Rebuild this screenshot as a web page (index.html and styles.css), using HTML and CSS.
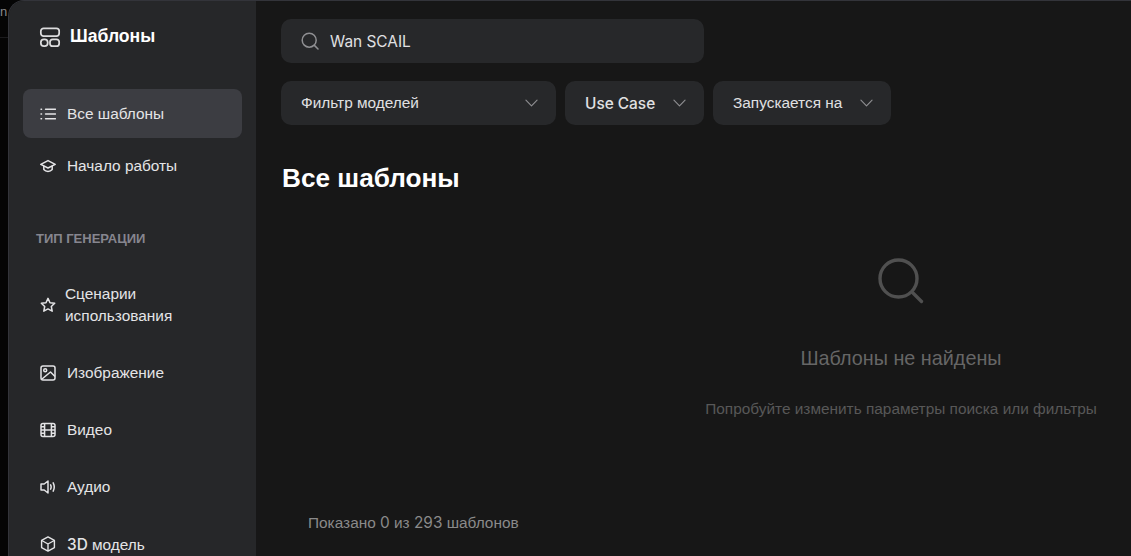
FILE: index.html
```html
<!DOCTYPE html>
<html lang="ru">
<head>
<meta charset="utf-8">
<title>Шаблоны</title>
<link rel="stylesheet" href="styles.css">
</head>
<body>
<div class="backdrop"><span class="backdrop-text">n</span></div>
<div class="dialog">
  <aside class="sidebar">
    <div class="brand">
      <svg class="brand-icon" viewBox="0 0 24 24" fill="none" stroke="currentColor" stroke-width="1.9" stroke-linecap="round" stroke-linejoin="round"><rect x="2" y="2.5" width="20" height="8.5" rx="3"/><rect x="2" y="14.5" width="7.5" height="7.5" rx="3.4"/><rect x="12" y="14.5" width="10" height="7.5" rx="3"/></svg>
      <span>Шаблоны</span>
    </div>
    <nav class="nav">
      <a class="item active">
        <svg class="icon" viewBox="0 0 16 16" fill="none" stroke="currentColor" stroke-width="1.4" stroke-linecap="round"><path d="M5.5 3.2H15.5M5.5 8H15.5M5.5 12.8H15.5M1 3.2h.6M1 8h.6M1 12.8h.6"/></svg>
        <span>Все шаблоны</span>
      </a>
      <a class="item start">
        <svg class="icon" viewBox="0 0 16 16" fill="none" stroke="currentColor" stroke-width="1.5" stroke-linecap="round" stroke-linejoin="round"><path d="M8 2.6.8 6.4 8 10l7.2-3.6z"/><path d="M3.8 8.2v3.4c1 1.2 2.6 1.8 4.2 1.8s3.2-.6 4.2-1.8V8.2"/></svg>
        <span>Начало работы</span>
      </a>
      <div class="section">ТИП ГЕНЕРАЦИИ</div>
      <a class="item wrap">
        <svg class="icon" viewBox="0 0 16 16" fill="none" stroke="currentColor" stroke-width="1.5" stroke-linejoin="round"><path d="m8 1.4 2 4.3 4.7.6-3.4 3.2.9 4.7L8 11.9l-4.2 2.3.9-4.7L1.3 6.3 6 5.7z"/></svg>
        <span class="wrap-label">Сценарии использования</span>
      </a>
      <a class="item image">
        <svg class="icon" viewBox="0 0 16 16" fill="none" stroke="currentColor" stroke-width="1.5" stroke-linejoin="round"><rect x="1" y="1" width="14" height="14" rx="2"/><circle cx="5.2" cy="5.2" r="1.5"/><path d="m2 14 8.5-7 4.5 4.5"/></svg>
        <span>Изображение</span>
      </a>
      <a class="item media">
        <svg class="icon" viewBox="0 0 16 16" fill="none" stroke="currentColor" stroke-width="1.5" stroke-linejoin="round"><rect x="1" y="1.5" width="14" height="13" rx="2"/><path d="M4.6 1.5v13M11.4 1.5v13M1 8h14M1 4.7h3.6M1 11.3h3.6M11.4 4.7H15M11.4 11.3H15"/></svg>
        <span>Видео</span>
      </a>
      <a class="item media">
        <svg class="icon" viewBox="0 0 16 16" fill="none" stroke="currentColor" stroke-width="1.5" stroke-linecap="round" stroke-linejoin="round"><path d="M8 2v12L4.2 11H1V5h3.2z"/><path d="M10.6 5.8c.7 1.4.7 3 0 4.4M13.2 3.8c1.3 2.6 1.3 5.8 0 8.4"/></svg>
        <span>Аудио</span>
      </a>
      <a class="item media">
        <svg class="icon" viewBox="0 0 16 16" fill="none" stroke="currentColor" stroke-width="1.4" stroke-linejoin="round"><path d="M8 .9 14.4 4.4v7.2L8 15.1l-6.4-3.5V4.4z"/><path d="M1.8 4.5 8 8l6.2-3.5M8 8v7"/></svg>
        <span><span class="latin">3D</span> модель</span>
      </a>
    </nav>
  </aside>
  <main class="main">
    <div class="search">
      <svg class="search-icon" viewBox="0 0 18 18" fill="none" stroke="currentColor" stroke-width="1.5" stroke-linecap="round"><circle cx="8.2" cy="8.2" r="7"/><path d="m13.4 13.4 3.6 3.6"/></svg>
      <span class="latin">Wan SCAIL</span>
    </div>
    <div class="filters">
      <div class="filter models"><span>Фильтр моделей</span><svg class="chev" viewBox="0 0 14 8" fill="none" stroke="currentColor" stroke-width="1.2" stroke-linecap="round" stroke-linejoin="round"><path d="m1 1 6 6 6-6"/></svg></div>
      <div class="filter usecase"><span class="latin">Use Case</span><svg class="chev" viewBox="0 0 14 8" fill="none" stroke="currentColor" stroke-width="1.2" stroke-linecap="round" stroke-linejoin="round"><path d="m1 1 6 6 6-6"/></svg></div>
      <div class="filter runs"><span>Запускается на</span><svg class="chev" viewBox="0 0 14 8" fill="none" stroke="currentColor" stroke-width="1.2" stroke-linecap="round" stroke-linejoin="round"><path d="m1 1 6 6 6-6"/></svg></div>
    </div>
    <h1 class="title">Все шаблоны</h1>
    <div class="empty">
      <svg class="empty-icon" viewBox="0 0 46 46" fill="none" stroke="currentColor" stroke-width="3.4" stroke-linecap="round"><circle cx="20.5" cy="20.5" r="18.5"/><path d="m34.5 34.5 9 9"/></svg>
      <div class="empty-title">Шаблоны не найдены</div>
      <div class="empty-text">Попробуйте изменить параметры поиска или фильтры</div>
    </div>
    <div class="count">Показано <span class="digits">0</span> из <span class="digits">293</span> шаблонов</div>
  </main>
</div>
</body>
</html>
```
FILE: styles.css
```css
* { box-sizing: border-box; }
html, body { height: 100%; }
body {
  margin: 0;
  display: flex;
  height: 556px;
  overflow: hidden;
  background: #050505;
  font-family: "Liberation Sans", Inter, sans-serif;
  color: #e6e6e7;
}
.latin { font-family: Inter, "Liberation Sans", sans-serif; font-weight: 500; }
.digits { font-family: Inter, "Liberation Sans", sans-serif; }
.backdrop {
  width: 8px;
  flex: none;
  overflow: hidden;
  padding-top: 3px;
  color: #8a8a8a;
  font-size: 13px;
  line-height: 18px;
  height: 38px;
  border-bottom: 1px solid #1b1b1d;
}
.backdrop-text { display: block; }
.dialog {
  flex: 1;
  min-width: 0;
  display: flex;
  background: #171717;
  border-top: 1px solid #33343a;
  border-left: 1px solid #33343a;
  border-top-left-radius: 16px;
  overflow: hidden;
}
.sidebar {
  width: 247px;
  flex: none;
  background: #262729;
  padding: 0 14px 0 14px;
}
.brand {
  display: flex;
  align-items: center;
  gap: 9px;
  height: 70px;
  padding: 1px 0 0 16px;
  font-size: 17.6px;
  font-weight: 700;
  color: #fff;
}
.brand-icon { width: 22px; height: 22px; color: #dcdcdd; flex: none; }
.nav { display: flex; flex-direction: column; padding-top: 18px; }
.item {
  display: flex;
  align-items: center;
  gap: 11px;
  padding: 0 17px;
  font-size: 15.4px;
  color: #e4e4e6;
}
.icon { width: 16px; height: 16px; flex: none; }
.item.active { height: 49px; background: #3c3d42; border-radius: 8px; }
.item.start { height: 55px; }
.section {
  margin-top: 38px;
  padding-left: 13px;
  font-size: 13px;
  line-height: 16px;
  font-weight: 700;
  color: #86868f;
}
.item.wrap { margin-top: 36px; gap: 9px; line-height: 22px; }
.wrap-label { width: 125px; }
.item.image { margin-top: 34px; height: 24px; }
.item.media { margin-top: 33px; height: 24px; }
.main {
  flex: 1;
  min-width: 0;
  padding: 18px 0 0 25px;
  display: flex;
  flex-direction: column;
}
.search {
  width: 423px;
  height: 44px;
  display: flex;
  align-items: center;
  gap: 11px;
  padding: 0 20px;
  background: #27282a;
  border-radius: 10px;
  font-size: 15.4px;
  color: #e0e0e2;
}
.search .latin { font-weight: 400; }
.search-icon { width: 18px; height: 18px; color: #8f8f92; flex: none; }
.filters { display: flex; gap: 9px; margin-top: 18px; }
.filter {
  height: 44px;
  display: flex;
  align-items: center;
  justify-content: space-between;
  padding: 0 20px;
  background: #27282a;
  border-radius: 10px;
  font-size: 15.4px;
  color: #e0e0e2;
}
.filter.models { width: 275px; padding-right: 18px; }
.filter.usecase { width: 139px; padding-right: 18px; }
.filter.runs { width: 178px; padding-right: 18px; }
.chev { width: 13px; height: 8px; color: #8f8f92; flex: none; }
.title {
  margin: 37px 0 0 1px;
  font-size: 26.2px;
  line-height: 32px;
  font-weight: 700;
  color: #fff;
}
.empty {
  margin-top: 64px;
  margin-left: 424px;
  width: 392px;
  display: flex;
  flex-direction: column;
  align-items: center;
  color: #666;
}
.empty-icon { width: 46px; height: 46px; color: #505050; }
.empty-title { margin-top: 40px; font-size: 19.8px; line-height: 28px; }
.empty-text { margin-top: 27px; font-size: 15.4px; line-height: 20px; color: #585858; white-space: nowrap; }
.count { margin: 94px 0 0 27px; font-size: 15.4px; line-height: 20px; color: #8a8a8a; }
```
